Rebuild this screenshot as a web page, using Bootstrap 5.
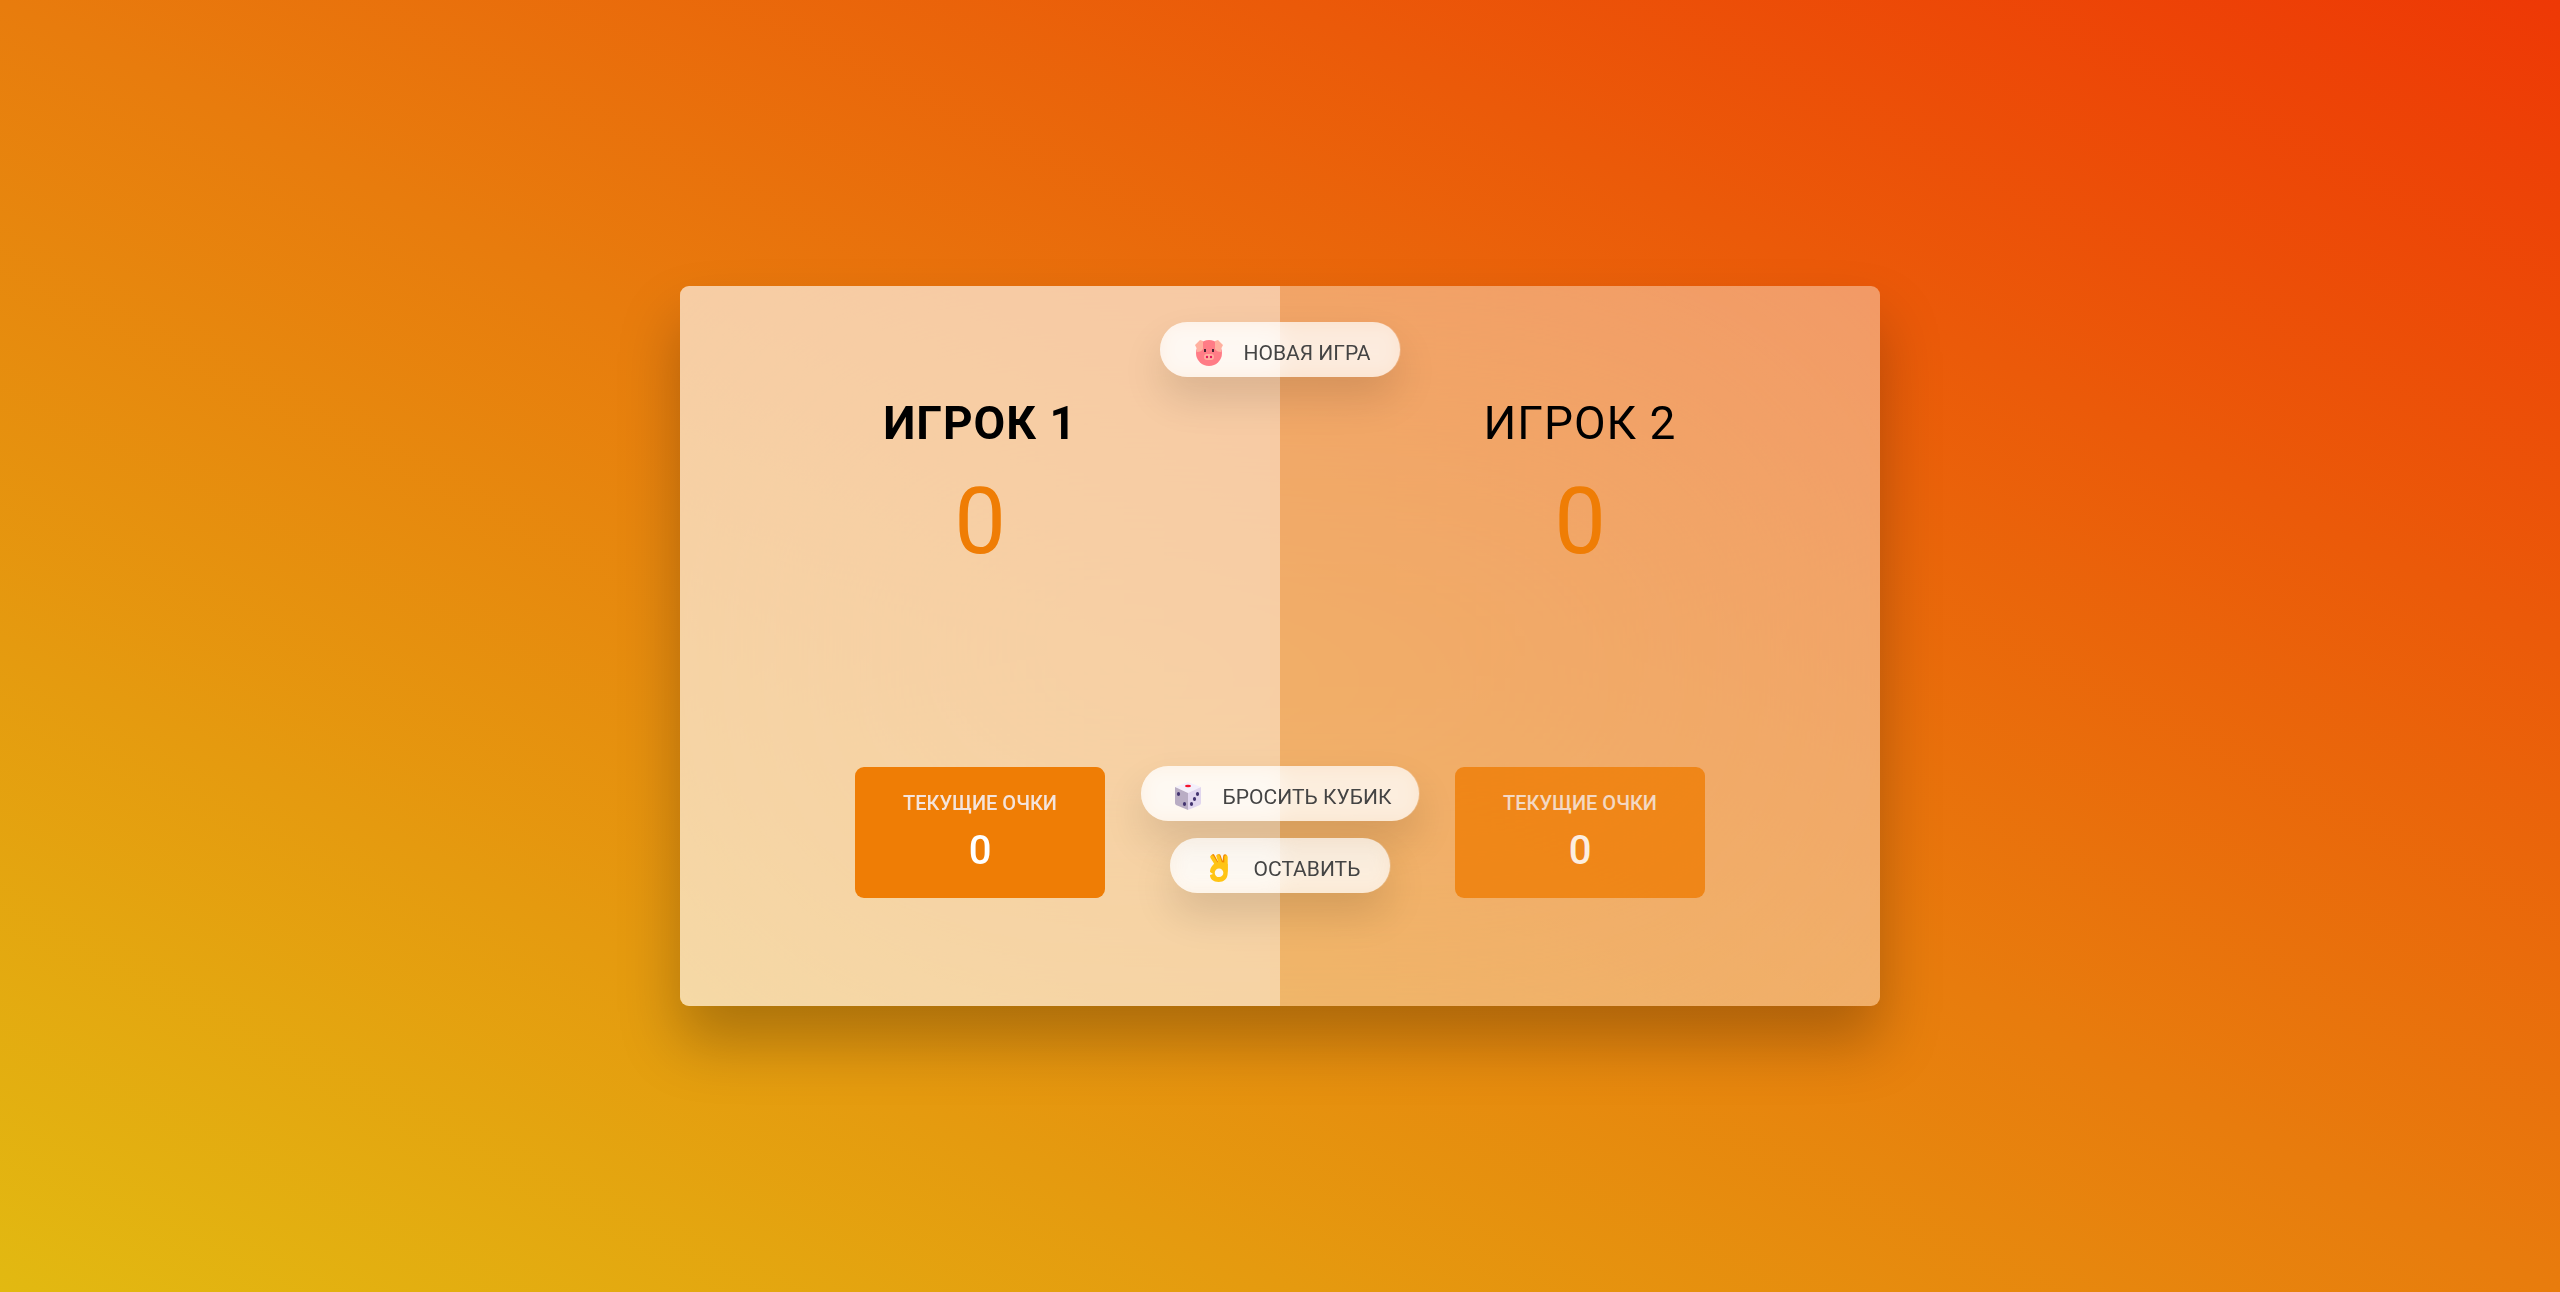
<!DOCTYPE html>
<html lang="ru">
<head>
<meta charset="utf-8">
<meta name="viewport" content="width=device-width, initial-scale=1">
<title>Pig Game</title>
<link href="https://cdn.jsdelivr.net/npm/bootstrap@5.3.0/dist/css/bootstrap.min.css" rel="stylesheet">
<style>
  body {
    font-family: Roboto, "Liberation Sans", sans-serif;
    color: #000;
    background: linear-gradient(to top right, #e2b911, #e87c0d 50%, #ee3805);
  }
  .game {
    width: 100%;
    max-width: 1200px;
    min-height: 720px;
    border-radius: 9px;
    background: rgba(255, 255, 255, .38);
    backdrop-filter: blur(200px);
    box-shadow: 0 36px 60px rgba(0, 0, 0, .25);
  }
  .player { padding: 108px; }
  .player-active {
    background: rgba(255, 255, 255, .4);
    border-radius: 9px 0 0 9px;
  }
  .player-name {
    font-size: 46px;
    line-height: 58px;
    letter-spacing: 1px;
    font-weight: 400;
    margin-bottom: 12px;
  }
  .player-active .player-name { font-weight: 700; }
  .score {
    font-size: 92px;
    line-height: 116px;
    color: #ef7d05;
  }
  .current {
    width: 250px;
    padding: 24px;
    border-radius: 9px;
    background: #ef7d05;
    color: #fff;
    opacity: .8;
  }
  .player-active .current { opacity: 1; }
  .current-label {
    font-size: 20px;
    line-height: 24px;
    font-weight: 500;
    margin-bottom: 12px;
    color: #f4e4dc;
  }
  .current-score {
    font-size: 40px;
    line-height: 47px;
    font-weight: 500;
  }
  .controls {
    inset: 36px 0 113px;
    pointer-events: none;
  }
  .game-btn {
    height: 55px;
    padding: 6px 30px 0;
    border: 0;
    border-radius: 600px;
    gap: 16px;
    color: #444;
    font-size: 21px;
    line-height: 30px;
    background: rgba(255, 255, 255, .65);
    backdrop-filter: blur(10px);
    box-shadow: 0 21px 42px rgba(0, 0, 0, .12);
    pointer-events: auto;
  }
  .roll-btn {
    padding-left: 28px;
    padding-right: 28px;
    margin-bottom: 17px;
  }
  .game-btn svg { width: 38px; height: 30px; }
</style>
</head>
<body class="min-vh-100 d-flex align-items-center justify-content-center">
<main class="game position-relative d-flex">
  <section class="player player-active w-50 d-flex flex-column align-items-center">
    <h2 class="player-name">ИГРОК 1</h2>
    <p class="score mb-auto">0</p>
    <div class="current text-center">
      <p class="current-label">ТЕКУЩИЕ ОЧКИ</p>
      <p class="current-score mb-0">0</p>
    </div>
  </section>
  <section class="player w-50 d-flex flex-column align-items-center">
    <h2 class="player-name">ИГРОК 2</h2>
    <p class="score mb-auto">0</p>
    <div class="current text-center">
      <p class="current-label">ТЕКУЩИЕ ОЧКИ</p>
      <p class="current-score mb-0">0</p>
    </div>
  </section>
  <div class="controls position-absolute d-flex flex-column align-items-center">
    <button type="button" class="game-btn d-flex align-items-center mb-auto">
      <svg viewBox="0 0 38 30" aria-hidden="true">
        <circle cx="19" cy="15" r="13" fill="#ff7c86"/>
        <path d="M10 2 5 7l2 4v3c3 0 5-1 6-3V3zM28 2l5 5-2 4v3c-3 0-5-1-6-3V3z" fill="#ffb09f"/>
        <rect x="14" y="11" width="2" height="3" fill="#4a2634"/>
        <rect x="22" y="11" width="2" height="3" fill="#4a2634"/>
        <rect x="14" y="16" width="10" height="6" rx="3" fill="#ffb09f"/>
        <circle cx="17" cy="19" r="1.2" fill="#e3145c"/>
        <circle cx="21" cy="19" r="1.2" fill="#e3145c"/>
      </svg>
      <span>НОВАЯ ИГРА</span>
    </button>
    <button type="button" class="game-btn roll-btn d-flex align-items-center">
      <svg viewBox="0 0 38 30" aria-hidden="true">
        <path d="M19 0 32 5 19 11 6 5z" fill="#f3effa"/>
        <path d="M6 5 19 11V28L7 23Q6 22 6 21z" fill="#b9adc4"/>
        <path d="M32 5 19 11V28L31 23Q32 22 32 21z" fill="#e1d6ee"/>
        <ellipse cx="19" cy="4" rx="3" ry="1.3" fill="#f4142c"/>
        <g fill="#43346f">
          <ellipse cx="9.5" cy="12" rx="1.6" ry="2"/>
          <ellipse cx="15.5" cy="22" rx="1.6" ry="2"/>
          <ellipse cx="22.5" cy="22" rx="1.6" ry="2"/>
          <ellipse cx="25.5" cy="17" rx="1.6" ry="2"/>
          <ellipse cx="28.5" cy="12" rx="1.6" ry="2"/>
        </g>
      </svg>
      <span>БРОСИТЬ КУБИК</span>
    </button>
    <button type="button" class="game-btn d-flex align-items-center">
      <svg viewBox="0 0 38 30" aria-hidden="true">
        <path d="M13 2 18 11M19 2l3 9M25 2l-1 8" stroke="#f28a00" stroke-width="3.6" stroke-linecap="round" fill="none"/>
        <path d="M12 3 17 11M18 2l3 9M26 3v14" stroke="#ffc414" stroke-width="3.4" stroke-linecap="round" fill="none"/>
        <path fill-rule="evenodd" d="M20 8q5 0 7.700 2v9c0 6-4 9-9 9-5.500 0-8.700-3-8.700-7l3-1-3-2c0-5 4-10 10-10zM19 14.500a4.300 4.300 0 1 0 .1 8.600 4.300 4.300 0 0 0-.1-8.600z" fill="#ffc414"/>
      </svg>
      <span>ОСТАВИТЬ</span>
    </button>
  </div>
</main>
<script src="https://cdn.jsdelivr.net/npm/bootstrap@5.3.0/dist/js/bootstrap.bundle.min.js"></script>
</body>
</html>
